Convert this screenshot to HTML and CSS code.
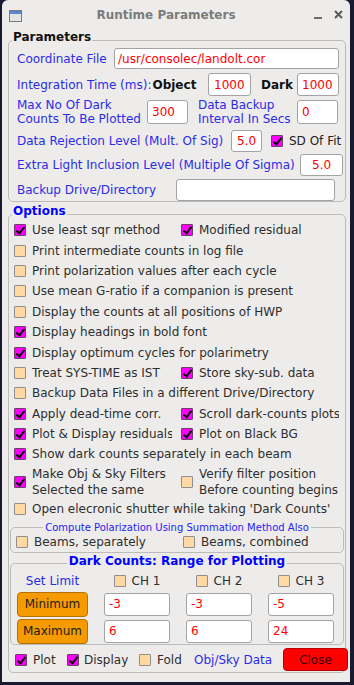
FILE: index.html
```html
<!DOCTYPE html>
<html>
<head>
<meta charset="utf-8">
<link rel="stylesheet" href="styles.css">
</head>
<body>
<div class="win">
  <div class="titlebar">
    <svg class="appicon" width="13" height="12" viewBox="0 0 13 12">
      <rect x="0.5" y="0.5" width="12" height="11" fill="#e4e4e4" stroke="#7a7a7a"/>
      <rect x="1" y="1" width="11" height="3" fill="#5b86c8"/>
    </svg>
    <div class="title">Runtime Parameters</div>
    <div class="wbtns">
      <span class="wmin"></span>
      <svg class="wclose" width="9" height="9" viewBox="0 0 9 9">
        <path d="M1 1 L8 8 M8 1 L1 8" stroke="#5a5a5a" stroke-width="2"/>
      </svg>
    </div>
  </div>

  <fieldset class="frame params">
    <legend class="lg lg-black">Parameters</legend>
    <div class="prow r1">
      <span class="plbl w-coord">Coordinate File</span>
      <span class="entry e-coord">/usr/consolec/landolt.cor</span>
    </div>
    <div class="prow r2">
      <span class="plbl w-int">Integration Time (ms):<b class="blk">Object</b></span>
      <span class="entry e-obj">1000</span>
      <span class="dark-lbl"><b class="blk">Dark</b></span>
      <span class="entry e-dark">1000</span>
    </div>
    <div class="prow r3">
      <span class="plbl two w-max">Max No Of Dark<br>Counts To Be Plotted</span>
      <span class="entry e-small">300</span>
      <span class="plbl two w-backup">Data Backup<br>Interval In Secs</span>
      <span class="entry e-small">0</span>
    </div>
    <div class="prow r4">
      <span class="plbl w-rej">Data Rejection Level (Mult. Of Sig)</span>
      <span class="entry e-rej">5.0</span>
      <span class="cb on sd"></span><span class="txt">SD Of Fit</span>
    </div>
    <div class="prow r5">
      <span class="plbl w-extra">Extra Light Inclusion Level (Multiple Of Sigma)</span>
      <span class="entry e-extra">5.0</span>
    </div>
    <div class="prow r6">
      <span class="plbl w-drive">Backup Drive/Directory</span>
      <span class="entry e-drive"></span>
    </div>
  </fieldset>

  <fieldset class="frame options">
    <legend class="lg lg-blue">Options</legend>
    <div class="optlist">
      <div class="orow">
        <div class="opt"><span class="cb on"></span><span class="otxt">Use least sqr method</span></div>
        <div class="opt"><span class="cb on"></span><span class="otxt">Modified residual</span></div>
      </div>
      <div class="orow">
        <div class="opt full"><span class="cb"></span><span class="otxt">Print intermediate counts in log file</span></div>
      </div>
      <div class="orow">
        <div class="opt full"><span class="cb"></span><span class="otxt">Print polarization values after each cycle</span></div>
      </div>
      <div class="orow">
        <div class="opt full"><span class="cb"></span><span class="otxt">Use mean G-ratio if a companion is present</span></div>
      </div>
      <div class="orow">
        <div class="opt full"><span class="cb"></span><span class="otxt">Display the counts at all positions of HWP</span></div>
      </div>
      <div class="orow">
        <div class="opt full"><span class="cb on"></span><span class="otxt">Display headings in bold font</span></div>
      </div>
      <div class="orow">
        <div class="opt full"><span class="cb on"></span><span class="otxt">Display optimum cycles for polarimetry</span></div>
      </div>
      <div class="orow">
        <div class="opt"><span class="cb"></span><span class="otxt">Treat SYS-TIME as IST</span></div>
        <div class="opt"><span class="cb on"></span><span class="otxt">Store sky-sub. data</span></div>
      </div>
      <div class="orow">
        <div class="opt full"><span class="cb"></span><span class="otxt">Backup Data Files in a different Drive/Directory</span></div>
      </div>
      <div class="orow">
        <div class="opt"><span class="cb on"></span><span class="otxt">Apply dead-time corr.</span></div>
        <div class="opt"><span class="cb on"></span><span class="otxt">Scroll dark-counts plots</span></div>
      </div>
      <div class="orow">
        <div class="opt"><span class="cb on"></span><span class="otxt">Plot &amp; Display residuals</span></div>
        <div class="opt"><span class="cb on"></span><span class="otxt">Plot on Black BG</span></div>
      </div>
      <div class="orow">
        <div class="opt full"><span class="cb on"></span><span class="otxt">Show dark counts separately in each beam</span></div>
      </div>
      <div class="orow tall">
        <div class="opt"><span class="cb on"></span><span class="otxt">Make Obj &amp; Sky Filters<br>Selected the same</span></div>
        <div class="opt"><span class="cb"></span><span class="otxt">Verify filter position<br>Before counting begins</span></div>
      </div>
      <div class="orow last">
        <div class="opt full"><span class="cb"></span><span class="otxt">Open elecronic shutter while taking 'Dark Counts'</span></div>
      </div>
    </div>

    <fieldset class="frame sub summ">
      <legend class="lg-small">Compute Polarization Using Summation Method Also</legend>
      <div class="orow beams">
        <div class="opt"><span class="cb"></span><span class="otxt">Beams, separately</span></div>
        <div class="opt"><span class="cb"></span><span class="otxt">Beams, combined</span></div>
      </div>
    </fieldset>

    <fieldset class="frame sub dark">
      <legend class="lg lg-blue lg-center">Dark Counts: Range for Plotting</legend>
      <div class="dgrid">
        <span class="setlim">Set Limit</span>
        <span class="ch"><span class="cb"></span>CH 1</span>
        <span class="ch"><span class="cb"></span>CH 2</span>
        <span class="ch"><span class="cb"></span>CH 3</span>
        <span class="obtn">Minimum</span>
        <span class="entry dentry">-3</span>
        <span class="entry dentry">-3</span>
        <span class="entry dentry">-5</span>
        <span class="obtn">Maximum</span>
        <span class="entry dentry">6</span>
        <span class="entry dentry">6</span>
        <span class="entry dentry">24</span>
      </div>
    </fieldset>

    <div class="bottom">
      <span class="bcell bc1"><span class="cb on"></span>Plot</span>
      <span class="bcell bc2"><span class="cb on"></span>Display</span>
      <span class="bcell bc3"><span class="cb"></span>Fold</span>
      <span class="bcell bc4 bluetxt">Obj/Sky Data</span>
      <span class="closebtn">Close</span>
    </div>
  </fieldset>
</div>
</body>
</html>
```
FILE: styles.css
```css
* { box-sizing: border-box; }
html, body { margin: 0; padding: 0; background: #181b30; }
body {
  font-family: "DejaVu Sans", sans-serif;
  font-size: 12px;
  width: 354px;
  height: 685px;
  overflow: hidden;
  color: #2e2e2e;
}
.win {
  margin-left: 2px;
  width: 348px;
  height: 682px;
  background: #edeceb;
  border-radius: 6px 6px 0 0;
}
.titlebar {
  height: 30px;
  display: flex;
  align-items: center;
}
.appicon { margin-left: 7px; flex: none; margin-top: 1px; }
.title {
  flex: 1;
  text-align: center;
  font-weight: bold;
  font-size: 12px;
  color: #7c7c7c;
}
.wbtns {
  width: 40px;
  height: 30px;
  display: flex;
  align-items: center;
  flex: none;
}
.wmin {
  display: block;
  width: 8px;
  height: 2px;
  background: #6c6c6c;
  margin-left: 4px;
  margin-top: 5px;
}
.wclose { display: block; margin-left: 12px; margin-top: -2px; }

/* frames */
fieldset.frame {
  margin: 0 4px 0 6px;
  padding: 0;
  border: 1px solid #bcbcbc;
  border-radius: 5px;
  min-width: 0;
}
.lg {
  font-weight: bold;
  font-size: 12px;
  line-height: 15px;
  padding: 0 1px 5px;
  margin-left: 3px;
}
.lg-black { color: #111; }
.lg-blue { color: #0000ff; }
.lg.lg-center { margin-left: auto; margin-right: auto; padding: 0 2px 5px; }
.lg-small {
  font-size: 10px;
  line-height: 12px;
  color: #2323f5;
  padding: 0 2px;
  margin-left: auto;
  margin-right: auto;
}

/* parameters */
fieldset.params { margin-top: 0; }
.prow {
  display: flex;
  align-items: center;
  padding-left: 8px;
  white-space: nowrap;
}
.plbl { color: #2b2be8; flex: none; overflow: visible; }
.plbl.two { line-height: 14px; }
.blk { color: #111; margin-left: 1px; }
.entry {
  display: flex;
  align-items: center;
  flex: none;
  height: 100%;
  background: #fff;
  border: 1px solid #a3a3a3;
  border-radius: 3px;
  color: #ff0000;
  padding-left: 4px;
  white-space: nowrap;
  overflow: hidden;
}
.r1 { margin-top: -2px; height: 21px; }
.r2 { margin-top: 4px; height: 23px; }
.r3 { margin-top: 2px; height: 28px; }
.r4 { margin-top: 4px; height: 22px; }
.r5 { margin-top: 2px; height: 22px; }
.r6 { margin-top: 3px; height: 22px; }
.w-coord { width: 97px; }
.entry.e-coord { width: 225px; padding-left: 3px; }
.w-int { width: 191px; }
.entry.e-obj { width: 43px; padding-left: 5px; }
.dark-lbl { width: 46px; padding-left: 9px; flex: none; }
.e-dark { width: 42px; }
.w-max { width: 130px; }
.entry.e-small { width: 41px; height: 24px; }
.plbl.w-backup { width: 109px; padding-left: 10px; }
.w-rej { width: 214px; }
.entry.e-rej { width: 31px; padding-left: 5px; }
.cb.sd { margin-left: 9px; margin-right: 6px; }
.txt { color: #222; }
.w-extra { width: 283px; }
.entry.e-extra { width: 43px; padding-left: 11px; }
.w-drive { width: 159px; }
.e-drive { width: 159px; }

/* checkboxes */
.cb {
  display: inline-block;
  width: 12px;
  height: 12px;
  border: 1px solid #8e8e8e;
  background: #ffd9a2;
  border-radius: 1px;
  flex: none;
  position: relative;
  margin-right: 6px;
}
.cb.on { background: #ff00ff; border-color: #6a406a; }
.cb.on::after {
  content: "";
  position: absolute;
  left: 3px;
  top: 0px;
  width: 3px;
  height: 7px;
  border: solid #000;
  border-width: 0 2px 2px 0;
  transform: rotate(38deg);
}

/* options */
fieldset.options { margin-top: 2px; }
.optlist { margin-top: -4px; padding-left: 5px; }
.orow {
  display: grid;
  grid-template-columns: 158px 158px;
  column-gap: 9px;
  height: 20.4px;
  align-items: center;
}
.orow.tall { height: 34px; }
.orow.tall .otxt { line-height: 16px; }
.orow.last { height: 20px; }
.opt {
  display: flex;
  align-items: center;
  overflow: hidden;
  white-space: nowrap;
}
.opt.full { grid-column: 1 / -1; }
.otxt { color: #2e2e2e; }

fieldset.frame.sub { margin: 0 1px; }
fieldset.frame.summ { margin-top: 3px; }
.orow.beams { margin-top: -2px; height: 20px; padding-left: 5px; }
fieldset.frame.dark { margin-top: 1px; }

.dgrid {
  display: grid;
  grid-template-columns: 71px 66px 66px 66px;
  grid-template-rows: 17px 25px 25px;
  column-gap: 16px;
  row-gap: 2px;
  margin: -1px 0 0 6px;
}
.setlim { color: #2b2be8; justify-self: center; align-self: center; }
.ch { display: flex; align-items: center; justify-self: center; color: #2e2e2e; }
.obtn {
  display: flex;
  align-items: center;
  justify-content: center;
  background: #f59b00;
  border: 1px solid #b67200;
  border-radius: 4px;
  color: #1c1c1c;
}
.entry.dentry { height: 23px; align-self: center; padding-left: 4px; }

.bottom {
  display: flex;
  align-items: center;
  height: 24px;
  margin-top: 3px;
  padding-left: 6px;
  white-space: nowrap;
}
.bcell { display: flex; align-items: center; flex: none; color: #2e2e2e; }
.bc1 { width: 52px; }
.bc2 { width: 72px; }
.bc2 .cb { margin-right: 5px; }
.bc3 { width: 55px; }
.bc4 { width: 89px; }
.bcell.bluetxt { color: #2b2be8; }
.closebtn {
  flex: none;
  width: 65px;
  height: 23px;
  margin-right: -4px;
  display: flex;
  align-items: center;
  justify-content: center;
  background: #ff0000;
  border: 1px solid #b80000;
  border-radius: 4px;
  color: #3a0000;
}
```
